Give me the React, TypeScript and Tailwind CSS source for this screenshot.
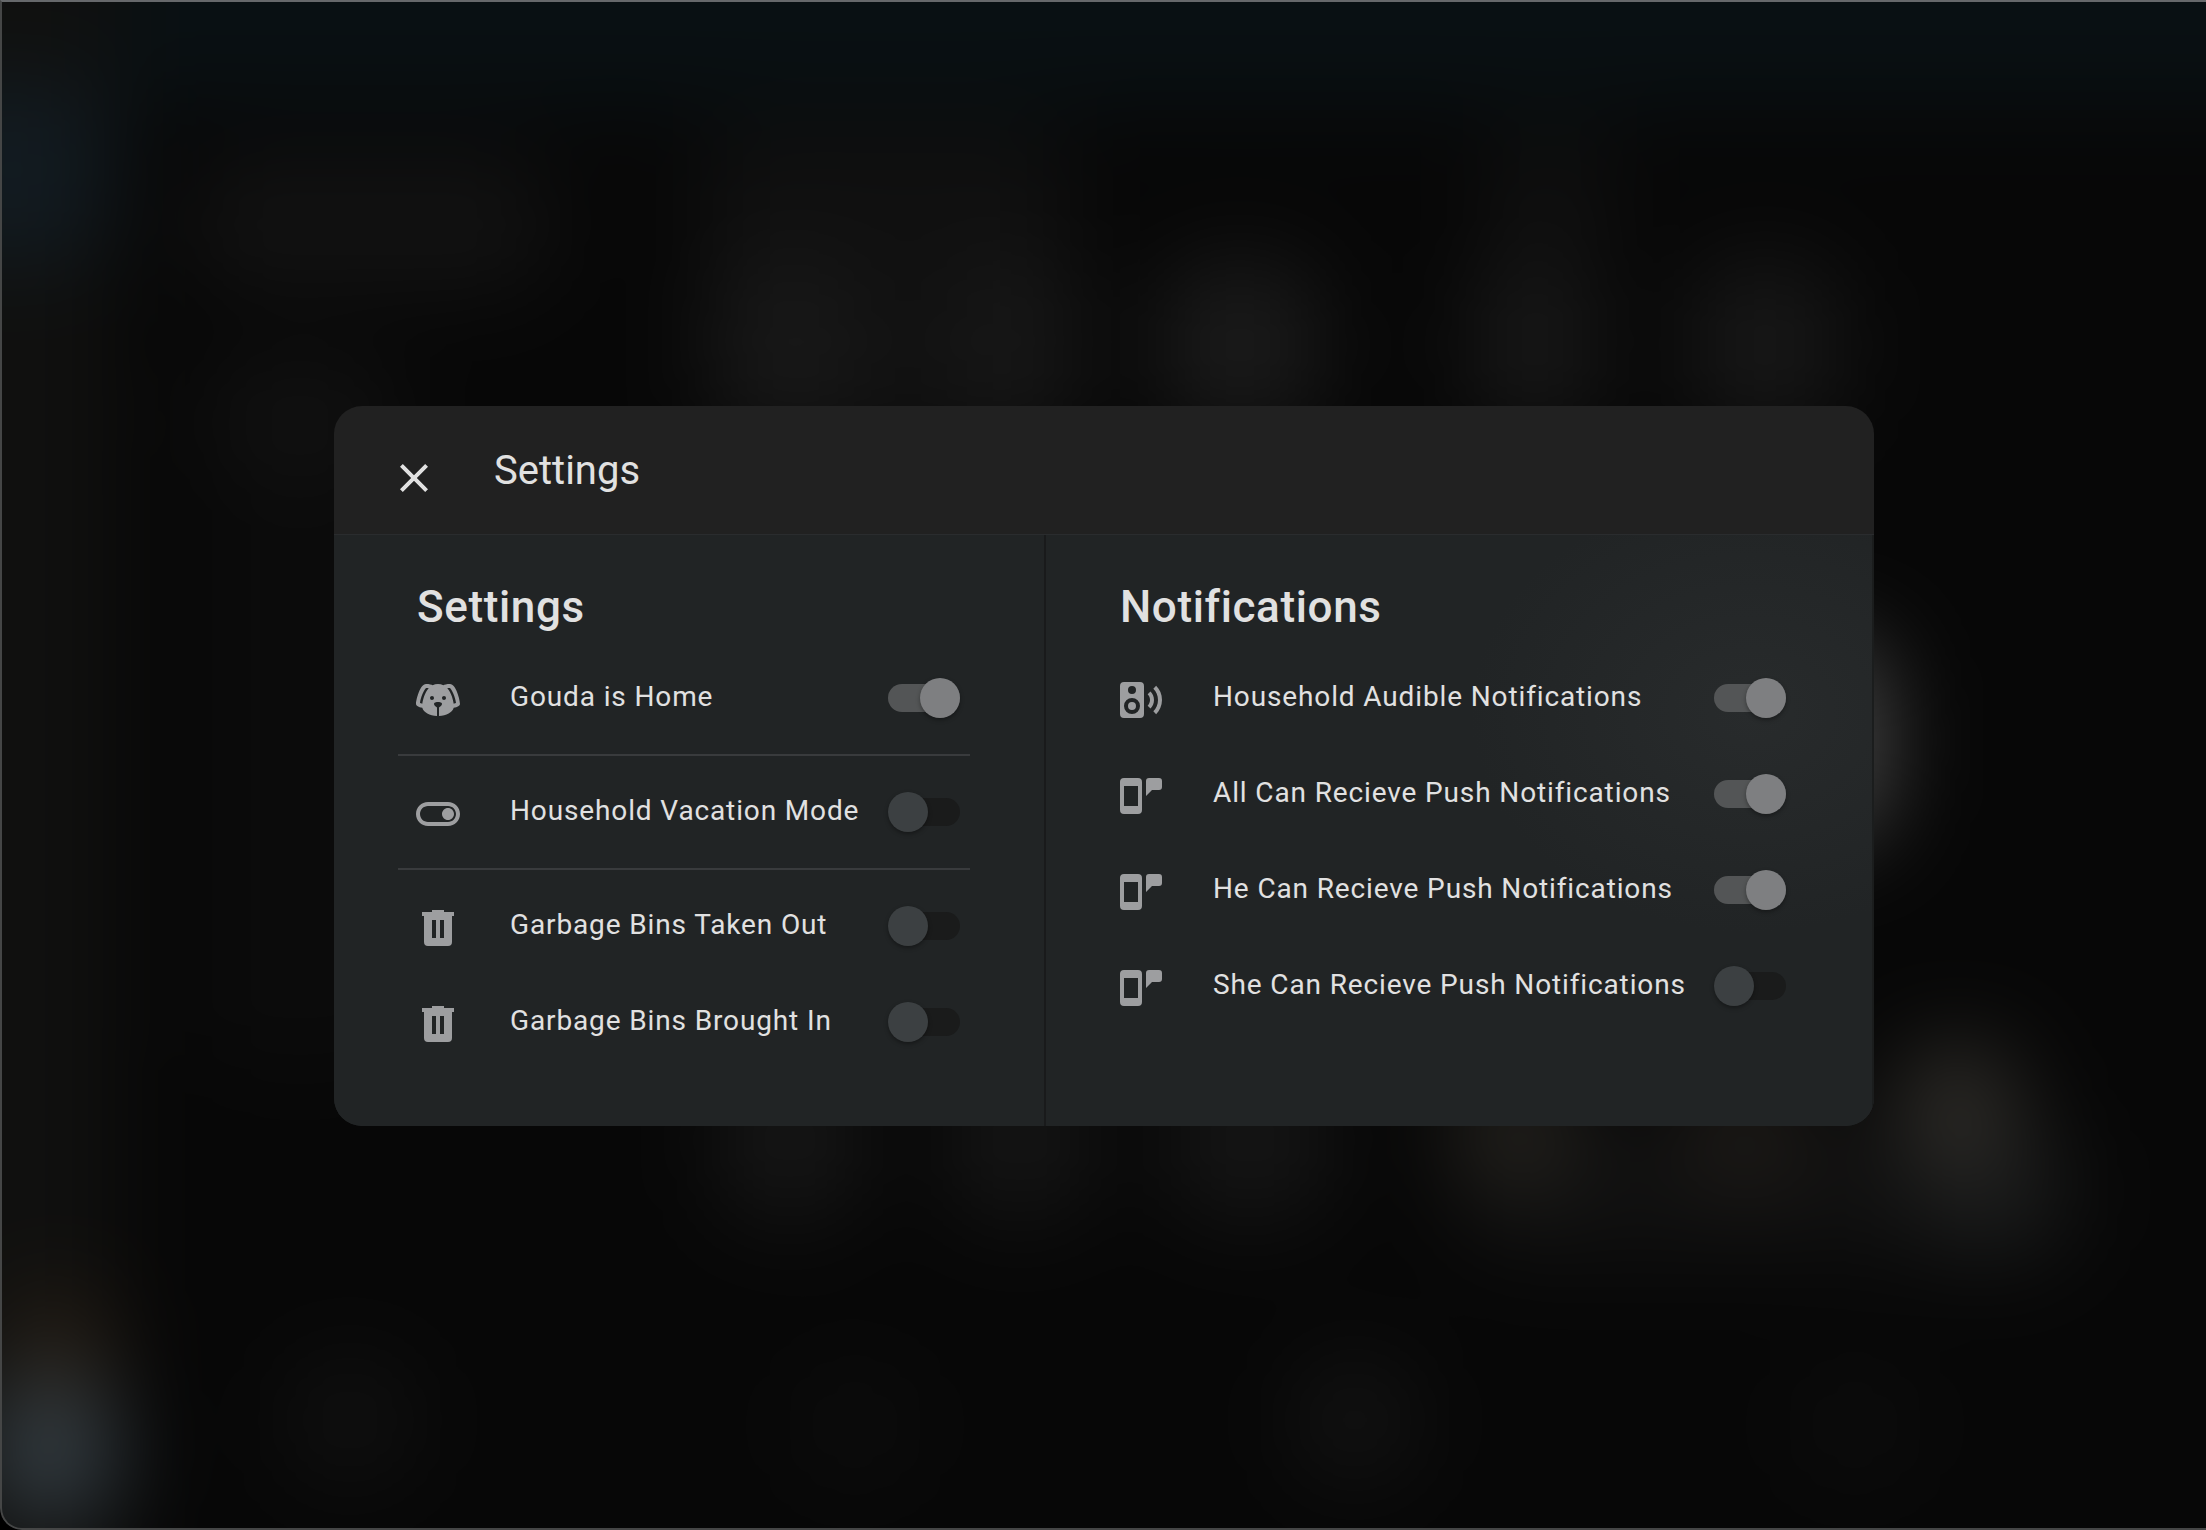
import React from "react";

const ICONS = {
  dog: "M18,4C16.29,4 15.25,4.33 14.65,4.61C13.88,4.23 13,4 12,4C11,4 10.12,4.23 9.35,4.61C8.75,4.33 7.71,4 6,4C3,4 1,12 1,14C1,14.83 2.32,15.59 4.14,15.9C4.78,18.14 7.8,19.85 11.5,20V15.72C10.91,15.35 10,14.68 10,14C10,13 12,13 12,13C12,13 14,13 14,14C14,14.68 13.09,15.35 12.5,15.72V20C16.2,19.85 19.22,18.14 19.86,15.9C21.68,15.59 23,14.83 23,14C23,12 21,4 18,4M4.15,13.87C3.65,13.75 3.26,13.61 3,13.5C3.25,10.73 5.2,6.4 6.05,6C6.59,6 7,6.06 7.37,6.11C5.27,8.42 4.44,12.04 4.15,13.87M9,12A1,1 0 0,1 8,11C8,10.46 8.45,10 9,10A1,1 0 0,1 10,11C10,11.56 9.55,12 9,12M15,12A1,1 0 0,1 14,11C14,10.46 14.45,10 15,10A1,1 0 0,1 16,11C16,11.56 15.55,12 15,12M19.85,13.87C19.56,12.04 18.73,8.42 16.63,6.11C17,6.06 17.41,6 17.95,6C18.8,6.4 20.75,10.73 21,13.5C20.75,13.61 20.36,13.75 19.85,13.87Z",
  toggle:
    "M17 6H7c-3.31 0-6 2.69-6 6s2.69 6 6 6h10c3.31 0 6-2.69 6-6s-2.69-6-6-6zm0 10H7c-2.21 0-4-1.79-4-4s1.79-4 4-4h10c2.21 0 4 1.79 4 4s-1.79 4-4 4zm0-7c-1.66 0-3 1.34-3 3s1.34 3 3 3 3-1.34 3-3-1.34-3-3-3z",
  trash:
    "M9,3V4H4V6H5V19A2,2 0 0,0 7,21H17A2,2 0 0,0 19,19V6H20V4H15V3H9M9,8H11V17H9V8M13,8H15V17H13V8Z",
  speaker:
    "M20.07,19.07L18.66,17.66C20.11,16.22 21,14.21 21,12C21,9.78 20.11,7.78 18.66,6.34L20.07,4.93C21.88,6.74 23,9.24 23,12C23,14.76 21.88,17.26 20.07,19.07M17.24,16.24L15.83,14.83C16.55,14.11 17,13.11 17,12C17,10.89 16.55,9.89 15.83,9.17L17.24,7.76C18.33,8.85 19,10.35 19,12C19,13.65 18.33,15.15 17.24,16.24M4,3H12A2,2 0 0,1 14,5V19A2,2 0 0,1 12,21H4A2,2 0 0,1 2,19V5A2,2 0 0,1 4,3M8,5A2,2 0 0,0 6,7A2,2 0 0,0 8,9A2,2 0 0,0 10,7A2,2 0 0,0 8,5M8,11A4,4 0 0,0 4,15A4,4 0 0,0 8,19A4,4 0 0,0 12,15A4,4 0 0,0 8,11M8,13A2,2 0 0,1 10,15A2,2 0 0,1 8,17A2,2 0 0,1 6,15A2,2 0 0,1 8,13Z",
  phone:
    "M4,3H11A2,2 0 0,1 13,5V19A2,2 0 0,1 11,21H4A2,2 0 0,1 2,19V5A2,2 0 0,1 4,3M4,7V17H11V7H4M16.5,3H21.5A1.5,1.5 0 0,1 23,4.5V7.5A1.5,1.5 0 0,1 21.5,9H18L15,12V4.5A1.5,1.5 0 0,1 16.5,3Z",
  close:
    "M19,6.41L17.59,5L12,10.59L6.41,5L5,6.41L10.59,12L5,17.59L6.41,19L12,13.41L17.59,19L19,17.59L13.41,12L19,6.41Z",
};

type IconName = keyof typeof ICONS;

function Icon({ name, className }: { name: IconName; className: string }) {
  return (
    <svg viewBox="0 0 24 24" className={className} fill="currentColor" fillRule="evenodd">
      <path d={ICONS[name]} />
    </svg>
  );
}

function Toggle({ on }: { on?: boolean }) {
  return (
    <div
      role="switch"
      aria-checked={!!on}
      className={
        on
          ? "flex h-7 w-[72px] shrink-0 items-center justify-end rounded-full bg-[#535556]"
          : "flex h-7 w-[72px] shrink-0 items-center justify-start rounded-full bg-[#1a1b1b]"
      }
    >
      <div
        className={
          on
            ? "size-10 rounded-full bg-[#7e7f81] shadow-[0_2px_4px_rgba(0,0,0,0.35)]"
            : "size-10 rounded-full bg-[#3c4042] shadow-[0_2px_4px_rgba(0,0,0,0.35)]"
        }
      />
    </div>
  );
}

function Row({ icon, label, on }: { icon: IconName; label: string; on?: boolean }) {
  return (
    <div className="flex h-20 items-center">
      <Icon name={icon} className="mt-1 size-12 shrink-0 text-[#9d9ea0]" />
      <span className="-mt-0.5 ml-12 flex-1 whitespace-nowrap text-[28px] leading-10 tracking-[0.87px] text-[#e1e1e1] group-data-[side=right]:ml-[49px]">
        {label}
      </span>
      <Toggle on={on} />
    </div>
  );
}

function Divider() {
  return <div className="-ml-4 -mr-2.5 my-4 h-0.5 bg-[#393b3d]" />;
}

const BLOBS = [
  "left-[-80px] top-[80px] h-[180px] w-[190px] bg-[#121b21]",
  "left-[10px] top-[1290px] h-[110px] w-[100px] bg-[#281f15]",
  "left-[-10px] top-[1380px] h-[140px] w-[125px] bg-[#353e44]",
  "left-[190px] top-[160px] h-[130px] w-[360px] bg-[#121212]",
  "left-[200px] top-[360px] h-[110px] w-[200px] bg-[#111111]",
  "left-[200px] top-[470px] h-[600px] w-[200px] bg-[#0b0b0b]",
  "left-[700px] top-[130px] h-[320px] w-[370px] bg-[#101010]",
  "left-[720px] top-[260px] h-[170px] w-[140px] bg-[#181818]",
  "left-[950px] top-[260px] h-[170px] w-[130px] bg-[#171717]",
  "left-[1160px] top-[260px] h-[170px] w-[160px] bg-[#1a1a1a]",
  "left-[1490px] top-[130px] h-[130px] w-[120px] bg-[#101010]",
  "left-[1470px] top-[260px] h-[170px] w-[130px] bg-[#171717]",
  "left-[1690px] top-[260px] h-[170px] w-[150px] bg-[#171717]",
  "left-[1700px] top-[640px] h-[200px] w-[185px] bg-[#474747]",
  "left-[720px] top-[1060px] h-[160px] w-[140px] bg-[#161616]",
  "left-[950px] top-[1060px] h-[160px] w-[140px] bg-[#151515]",
  "left-[1170px] top-[1060px] h-[160px] w-[160px] bg-[#151515]",
  "left-[1460px] top-[1120px] h-[140px] w-[620px] bg-[#101010]",
  "left-[1450px] top-[1070px] h-[120px] w-[130px] bg-[#23211d]",
  "left-[1680px] top-[1070px] h-[120px] w-[130px] bg-[#1d1a17]",
  "left-[1920px] top-[1130px] h-[130px] w-[130px] bg-[#1a1b1b]",
  "left-[1900px] top-[1045px] h-[120px] w-[115px] bg-[#302e2a]",
  "left-[290px] top-[1360px] h-[120px] w-[120px] bg-[#111111]",
  "left-[800px] top-[1370px] h-[110px] w-[110px] bg-[#0d0d0d]",
  "left-[1300px] top-[1360px] h-[120px] w-[110px] bg-[#141414]",
  "left-[1800px] top-[1370px] h-[110px] w-[110px] bg-[#0d0d0d]",
];

function Backdrop() {
  return (
    <div className="absolute inset-0 overflow-hidden" aria-hidden>
      {/* One blur over the whole layer keeps the dark tones smooth. */}
      <div className="absolute -inset-[160px] bg-[#070707] blur-[46px]">
        <div className="absolute inset-x-0 top-0 h-[265px] bg-[#091013]" />
        <div className="absolute left-0 top-0 h-full w-[275px] bg-[#10100f]" />
        <div className="absolute inset-[160px]">
          {BLOBS.map((b) => (
            <div key={b} className={`absolute rounded-[50px] ${b}`} />
          ))}
        </div>
      </div>
    </div>
  );
}

export default function App() {
  return (
    <div className="relative flex h-[1530px] w-[2206px] flex-col items-start overflow-hidden bg-black font-['Roboto',sans-serif]">
      <div className="absolute inset-0 overflow-hidden rounded-bl-[22px]">
        <Backdrop />
        <div className="absolute inset-y-0 left-0 -right-8 rounded-bl-[22px] border-2 border-[#454646] border-t-[#66686b]" />
      </div>

      <div className="relative ml-[334px] mt-[406px] flex h-[720px] w-[1540px] flex-col overflow-hidden rounded-[28px]">
        <header className="flex h-32 shrink-0 items-center bg-[#212121] pl-14 text-[#e1e1e1]">
          <Icon name="close" className="mt-4 size-12" />
          <h1 className="ml-14 mt-0.5 text-[40px] font-normal leading-[48px]">Settings</h1>
        </header>
        <div className="flex flex-1 border-t border-[#2a2c2e] bg-[#212425] bg-[radial-gradient(ellipse_280px_220px_at_92%_30%,#282b2c,#212425)]">
          <section data-side="left" className="group w-[712px] border-r-2 border-[#191a1b] pl-20 pr-[84px] pt-11">
            <h2 className="pl-[3px] text-[44px] font-medium leading-[56px] tracking-[0.62px] text-[#e1e1e1]">
              Settings
            </h2>
            <div className="mt-[23px]">
              <Row icon="dog" label="Gouda is Home" on />
              <Divider />
              <Row icon="toggle" label="Household Vacation Mode" />
              <Divider />
              <Row icon="trash" label="Garbage Bins Taken Out" />
              <div className="h-4" />
              <Row icon="trash" label="Garbage Bins Brought In" />
            </div>
          </section>
          <section data-side="right" className="group flex-1 border-r-2 border-[#1b1d1d] pl-[70px] pr-[86px] pt-11">
            <h2 className="pl-1 text-[44px] font-medium leading-[56px] tracking-[0.62px] text-[#e1e1e1]">
              Notifications
            </h2>
            <div className="mt-[23px] flex flex-col gap-4">
              <Row icon="speaker" label="Household Audible Notifications" on />
              <Row icon="phone" label="All Can Recieve Push Notifications" on />
              <Row icon="phone" label="He Can Recieve Push Notifications" on />
              <Row icon="phone" label="She Can Recieve Push Notifications" />
            </div>
          </section>
        </div>
      </div>
    </div>
  );
}
